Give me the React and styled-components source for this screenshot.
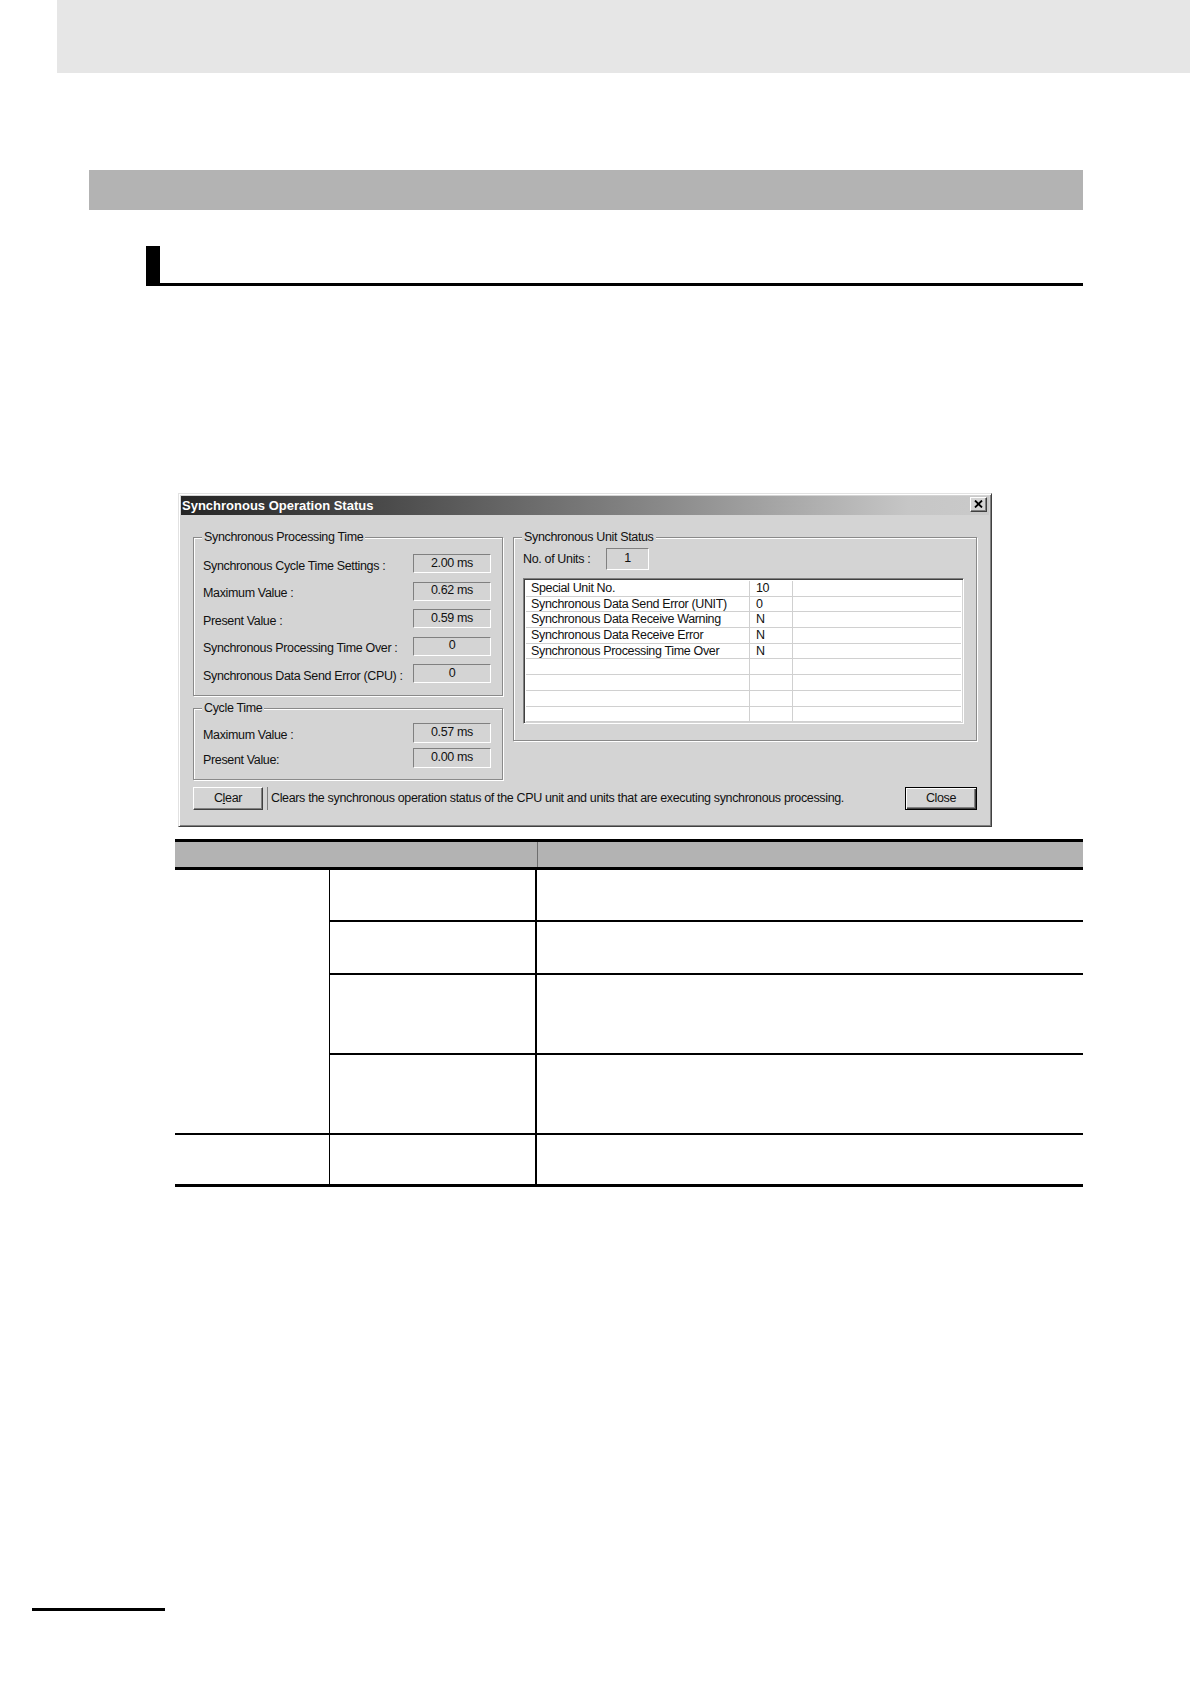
import React from 'react'
import styled, { createGlobalStyle } from 'styled-components'

const GlobalStyle = createGlobalStyle`
  html, body {
    margin: 0;
    padding: 0;
    background: #fff;
  }
  body {
    font-family: "Liberation Sans", Arial, sans-serif;
    color: #111;
  }
`

const Page = styled.div`
  width: 1190px;
  min-height: 1684px;
  background: #fff;
  overflow: hidden;
`

const TopBand = styled.div`
  margin-left: 57px;
  height: 73px;
  background: #e6e6e6;
`

const SectionBar = styled.div`
  margin: 97px 0 0 89px;
  width: 994px;
  height: 40px;
  background: #b3b3b3;
`

const Heading = styled.div`
  box-sizing: border-box;
  margin: 36px 0 0 146px;
  width: 937px;
  height: 40px;
  border-left: 14px solid #000;
  border-bottom: 3px solid #000;
`

/* ---------- dialog ---------- */

const Dialog = styled.div`
  box-sizing: border-box;
  margin: 207px 0 0 178px;
  width: 814px;
  padding: 2px;
  background: #d4d4d4;
  border: 1px solid;
  border-color: #e2e2e2 #404040 #404040 #e2e2e2;
  box-shadow: inset 1px 1px 0 #fff, inset -1px -1px 0 #808080;
  font-size: 12.5px;
  letter-spacing: -0.35px;
`

const TitleBar = styled.div`
  height: 19px;
  display: flex;
  align-items: center;
  justify-content: space-between;
  padding: 0 2px 0 1px;
  background: linear-gradient(to right, #262626 0%, #4a4a4a 25%, #8a8a8a 60%, #c6c6c6 90%, #cacaca 100%);
`

const Title = styled.span`
  color: #fff;
  font-weight: bold;
  font-size: 13px;
  letter-spacing: 0;
`

const CloseX = styled.div`
  box-sizing: border-box;
  width: 17px;
  height: 15px;
  margin-top: -3px;
  display: flex;
  align-items: center;
  justify-content: center;
  background: #d4d4d4;
  border: 1px solid;
  border-color: #fff #404040 #404040 #fff;
  box-shadow: inset -1px -1px 0 #808080;
`

const DialogBody = styled.div`
  padding: 22px 12px 14px 12px;
  display: flex;
  flex-direction: column;
  gap: 7px;
`

const TopRow = styled.div`
  display: flex;
  gap: 10px;
  align-items: flex-start;
`

const LeftCol = styled.div`
  width: 310px;
  display: flex;
  flex-direction: column;
  gap: 12px;
`

const Group = styled.div`
  position: relative;
  box-sizing: border-box;
  width: ${p => p.$w}px;
  height: ${p => p.$h}px;
  padding: ${p => p.$pad};
  border: 1px solid #8a8a8a;
  box-shadow: 1px 1px 0 #fff, inset 1px 1px 0 #fff;
`

const Legend = styled.span`
  position: absolute;
  top: -8px;
  left: 8px;
  padding: 0 2px;
  line-height: 15px;
  background: #d4d4d4;
`

const FieldGrid = styled.div`
  display: grid;
  grid-template-columns: 1fr 78px;
  grid-auto-rows: ${p => p.$row}px;
  row-gap: ${p => p.$gap}px;
  align-items: center;
`

const Label = styled.span`
  padding-top: 4px;
  white-space: nowrap;
`

const ValueBox = styled.div`
  box-sizing: border-box;
  height: 100%;
  width: ${p => (p.$w ? `${p.$w}px` : 'auto')};
  display: flex;
  align-items: center;
  justify-content: center;
  border: 1px solid;
  border-color: #808080 #fff #fff #808080;
  padding-bottom: 2px;
  white-space: nowrap;
`

const UnitsRow = styled.div`
  display: flex;
  align-items: center;
  height: 22px;
`

const UnitsLabel = styled.span`
  width: 83px;
`

const ListBox = styled.div`
  box-sizing: border-box;
  margin-top: 8px;
  width: 441px;
  height: 146px;
  background: #fff;
  border: 1px solid;
  border-color: #808080 #fff #fff #808080;
  box-shadow: inset 1px 1px 0 #404040, inset -1px -1px 0 #d4d4d4;
  padding: 2px 2px 0 2px;
  display: grid;
  grid-template-columns: 224px 43px 1fr;
  grid-auto-rows: 15.7px;
  overflow: hidden;
`

const ListCell = styled.div`
  box-sizing: border-box;
  padding-left: ${p => p.$pl}px;
  border-bottom: 1px solid #d0d0d0;
  border-right: ${p => (p.$last ? 'none' : '1px solid #d0d0d0')};
  line-height: 14px;
  white-space: nowrap;
`

const BottomRow = styled.div`
  display: flex;
  align-items: center;
  height: 23px;
`

const Button = styled.div`
  box-sizing: border-box;
  width: ${p => p.$w}px;
  height: 23px;
  display: flex;
  align-items: center;
  justify-content: center;
  background: #d4d4d4;
  border: 1px solid;
  border-color: ${p => (p.$default ? '#000' : '#fff #404040 #404040 #fff')};
  box-shadow: ${p =>
    p.$default
      ? 'inset 1px 1px 0 #fff, inset -1px -1px 0 #404040, inset -2px -2px 0 #808080'
      : 'inset -1px -1px 0 #808080'};
  padding-bottom: 1px;
`

const Hint = styled.span`
  flex: 1;
  margin-left: 4px;
  padding-left: 3px;
  height: 23px;
  line-height: 23px;
  border-left: 1px solid #808080;
  white-space: nowrap;
`

/* ---------- spec table ---------- */

const Table = styled.div`
  margin: 12px 0 0 175px;
  width: 908px;
`

const HeadRow = styled.div`
  display: grid;
  grid-template-columns: 362px 546px;
  height: 25px;
  border-top: 3px solid #000;
  border-bottom: 3px solid #000;
  background: #b3b3b3;
`

const HeadCell = styled.div`
  border-left: ${p => (p.$divider ? '1px solid #6e6e6e' : 'none')};
`

const BodyGrid = styled.div`
  display: grid;
  grid-template-columns: 155px 207px 546px;
  grid-template-rows: 52px 53px 80px 80px 49px;
  border-bottom: 3px solid #000;
`

const Cell = styled.div`
  box-sizing: border-box;
  grid-row: ${p => (p.$span ? `span ${p.$span}` : 'auto')};
  border-right: ${p => (p.$divider ? `${p.$divider}px solid #000` : 'none')};
  border-bottom: ${p => (p.$last ? 'none' : '2px solid #000')};
`

const FootRule = styled.div`
  margin: 421px 0 0 32px;
  width: 133px;
  height: 3px;
  background: #000;
`

const syncRows = [
  ['Synchronous Cycle Time Settings :', '2.00 ms'],
  ['Maximum Value :', '0.62 ms'],
  ['Present Value :', '0.59 ms'],
  ['Synchronous Processing Time Over :', '0'],
  ['Synchronous Data Send Error (CPU) :', '0'],
]

const cycleRows = [
  ['Maximum Value :', '0.57 ms'],
  ['Present Value:', '0.00 ms'],
]

const unitRows = [
  ['Special Unit No.', '10'],
  ['Synchronous Data Send Error (UNIT)', '0'],
  ['Synchronous Data Receive Warning', 'N'],
  ['Synchronous Data Receive Error', 'N'],
  ['Synchronous Processing Time Over', 'N'],
  ['', ''],
  ['', ''],
  ['', ''],
  ['', ''],
]

const XIcon = () => (
  <svg width="9" height="8" viewBox="0 0 9 8">
    <path d="M1 0.5 L8 7.5 M8 0.5 L1 7.5" stroke="#000" strokeWidth="1.8" />
  </svg>
)

const App = () => (
  <Page>
    <GlobalStyle />
    <TopBand />
    <SectionBar />
    <Heading />

    <Dialog>
      <TitleBar>
        <Title>Synchronous Operation Status</Title>
        <CloseX>
          <XIcon />
        </CloseX>
      </TitleBar>
      <DialogBody>
        <TopRow>
          <LeftCol>
            <Group $w={310} $h={159} $pad="16px 11px 0 9px">
              <Legend>Synchronous Processing Time</Legend>
              <FieldGrid $row={19} $gap={8.5}>
                {syncRows.map(([label, value]) => (
                  <React.Fragment key={label}>
                    <Label>{label}</Label>
                    <ValueBox>{value}</ValueBox>
                  </React.Fragment>
                ))}
              </FieldGrid>
            </Group>
            <Group $w={310} $h={72} $pad="14px 11px 0 9px">
              <Legend>Cycle Time</Legend>
              <FieldGrid $row={20} $gap={5}>
                {cycleRows.map(([label, value]) => (
                  <React.Fragment key={label}>
                    <Label>{label}</Label>
                    <ValueBox>{value}</ValueBox>
                  </React.Fragment>
                ))}
              </FieldGrid>
            </Group>
          </LeftCol>

          <Group $w={464} $h={204} $pad="10px 12px 0 9px">
            <Legend>Synchronous Unit Status</Legend>
            <UnitsRow>
              <UnitsLabel>No. of Units :</UnitsLabel>
              <ValueBox $w={43}>1</ValueBox>
            </UnitsRow>
            <ListBox>
              {unitRows.map(([name, val], i) => (
                <React.Fragment key={i}>
                  <ListCell $pl={5}>{name}</ListCell>
                  <ListCell $pl={6}>{val}</ListCell>
                  <ListCell $pl={4} $last />
                </React.Fragment>
              ))}
            </ListBox>
          </Group>
        </TopRow>

        <BottomRow>
          <Button $w={70}>
            C<u>l</u>ear
          </Button>
          <Hint>
            Clears the synchronous operation status of the CPU unit and units that are executing
            synchronous processing.
          </Hint>
          <Button $w={72} $default>
            Close
          </Button>
        </BottomRow>
      </DialogBody>
    </Dialog>

    <Table>
      <HeadRow>
        <HeadCell />
        <HeadCell $divider />
      </HeadRow>
      <BodyGrid>
        <Cell $span={4} $divider={1} />
        <Cell $divider={2} />
        <Cell />
        <Cell $divider={2} />
        <Cell />
        <Cell $divider={2} />
        <Cell />
        <Cell $divider={2} />
        <Cell />
        <Cell $divider={1} $last />
        <Cell $divider={2} $last />
        <Cell $last />
      </BodyGrid>
    </Table>

    <FootRule />
  </Page>
)

export default App
